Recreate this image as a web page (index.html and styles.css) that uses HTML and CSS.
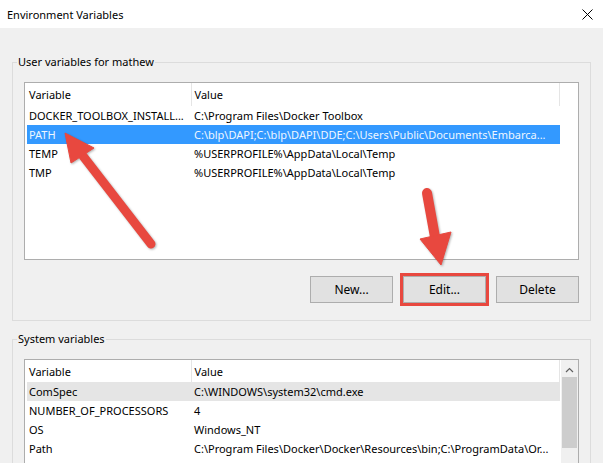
FILE: index.html
```html
<!DOCTYPE html>
<html lang="en">
<head>
    <meta charset="UTF-8">
    <meta name="viewport" content="width=device-width, initial-scale=1.0">
    <title>Environment Variables</title>
    <link rel="stylesheet" href="styles.css">
</head>
<body>
    <div class="window">
        <header class="titlebar">
            <span class="title">Environment Variables</span>
            <svg class="close" width="11" height="11" viewBox="0 0 11 11">
                <path d="M0.5 0.5L10.5 10.5M10.5 0.5L0.5 10.5" stroke="#000" stroke-width="1" fill="none"/>
            </svg>
        </header>

        <main class="content">
            <fieldset class="group">
                <legend>User variables for mathew</legend>
                <div class="list user-list">
                    <table>
                        <colgroup><col class="col-name"><col class="col-value"></colgroup>
                        <thead>
                            <tr><th>Variable</th><th>Value</th></tr>
                        </thead>
                        <tbody>
                            <tr><td>DOCKER_TOOLBOX_INSTALL...</td><td>C:\Program Files\Docker Toolbox</td></tr>
                            <tr class="selected"><td>PATH</td><td>C:\blp\DAPI;C:\blp\DAPI\DDE;C:\Users\Public\Documents\Embarca...</td></tr>
                            <tr><td>TEMP</td><td>%USERPROFILE%\AppData\Local\Temp</td></tr>
                            <tr><td>TMP</td><td>%USERPROFILE%\AppData\Local\Temp</td></tr>
                        </tbody>
                    </table>
                </div>
                <div class="buttons">
                    <button>New...</button>
                    <button class="highlight">Edit...</button>
                    <button>Delete</button>
                </div>
            </fieldset>

            <fieldset class="group system">
                <legend>System variables</legend>
                <div class="list system-list">
                    <table>
                        <colgroup><col class="col-name"><col class="col-value"></colgroup>
                        <thead>
                            <tr><th>Variable</th><th>Value</th></tr>
                        </thead>
                        <tbody>
                            <tr class="current"><td>ComSpec</td><td>C:\WINDOWS\system32\cmd.exe</td></tr>
                            <tr><td>NUMBER_OF_PROCESSORS</td><td>4</td></tr>
                            <tr><td>OS</td><td>Windows_NT</td></tr>
                            <tr><td>Path</td><td>C:\Program Files\Docker\Docker\Resources\bin;C:\ProgramData\Or...</td></tr>
                        </tbody>
                    </table>
                    <div class="scrollbar">
                        <svg class="scroll-up" width="9" height="6" viewBox="0 0 9 6">
                            <path d="M1 5L4.5 1.5L8 5" stroke="#606060" stroke-width="1.2" fill="none"/>
                        </svg>
                        <div class="thumb"></div>
                    </div>
                </div>
            </fieldset>
        </main>

        <!-- red arrows drawn over the dialog -->
        <svg class="annotations" width="603" height="463" viewBox="0 0 603 463">
            <g fill="#e8483f" stroke="#e8483f">
                <line x1="83" y1="156" x2="151" y2="244" stroke-width="9" stroke-linecap="round"/>
                <polygon points="65,133 94,148 71,163" stroke-width="1" stroke-linejoin="round"/>
                <line x1="427" y1="193" x2="435" y2="237" stroke-width="10" stroke-linecap="round"/>
                <polygon points="420,239 451,232 441,265" stroke-width="1" stroke-linejoin="round"/>
            </g>
        </svg>
    </div>
</body>
</html>
```

FILE: styles.css
```css
* {
    box-sizing: border-box;
}

body {
    margin: 0;
    font-family: "Noto Sans", "Open Sans", sans-serif;
    font-size: 11px;
    color: #000;
    background-color: #f0f0f0;
}

.window {
    position: relative;
    width: 603px;
    height: 463px;
    overflow: hidden;
    background-color: #f0f0f0;
}

.titlebar {
    height: 28px;
    background-color: #fff;
    display: flex;
    align-items: center;
    justify-content: space-between;
    padding: 0 10px 0 7px;
}

.content {
    padding: 26px 12px 0;
}

.group {
    margin: 0;
    min-width: 0;
    border: 1px solid #dcdcdc;
    padding: 12px 11px 17px;
}

.group legend {
    padding: 0 1px;
    margin-left: -7px;
    line-height: 16px;
}

.system {
    margin-top: 10px;
}

.list {
    display: flex;
    align-items: flex-start;
    background-color: #fff;
    border: 1px solid #adadad;
    padding-left: 2px;
}

.user-list {
    height: 178px;
}

.system-list {
    height: 130px;
}

table {
    border-collapse: collapse;
    table-layout: fixed;
    width: 533px;
}

.col-name {
    width: 164px;
}

th {
    font-weight: normal;
    text-align: left;
    height: 23px;
    padding: 0 0 0 2px;
    border-right: 1px solid #e5e5e5;
}

.system-list th {
    height: 22px;
}

td {
    height: 19px;
    padding: 0 0 0 2px;
    white-space: nowrap;
    overflow: hidden;
}

th + th,
td + td {
    padding-left: 3px;
}

.selected td {
    background-color: #3399ff;
    color: #eef6ff;
}

.current td {
    background-color: #e5e5e5;
}

.scrollbar {
    margin-left: auto;
    width: 17px;
    align-self: stretch;
    background-color: #f0f0f0;
    display: flex;
    flex-direction: column;
    align-items: center;
}

.scroll-up {
    margin-top: 7px;
}

.thumb {
    margin-top: 4px;
    width: 15px;
    height: 71px;
    background-color: #cdcdcd;
}

.buttons {
    display: flex;
    justify-content: flex-end;
    gap: 10px;
    margin-top: 16px;
}

.buttons button {
    width: 83px;
    height: 27px;
    padding: 0;
    font: inherit;
    font-size: 12px;
    color: #000;
    background-color: #e1e1e1;
    border: 1px solid #adadad;
}

.buttons .highlight {
    outline: 3px solid #e8483f;
}

.annotations {
    position: absolute;
    top: 0;
    left: 0;
    pointer-events: none;
    filter: drop-shadow(1px 1px 1px rgba(0, 0, 0, 0.3));
}
```
